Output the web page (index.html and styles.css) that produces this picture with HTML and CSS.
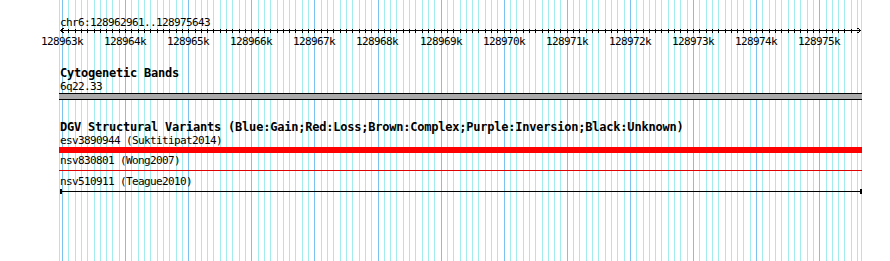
FILE: index.html
```html
<!DOCTYPE html>
<html lang="en">
<head>
    <meta charset="UTF-8">
    <title>chr6:128962961..128975643</title>
    <link rel="stylesheet" href="styles.css">
</head>
<body>
    <div class="panel">
        <svg class="grid" id="grid" width="890" height="261"></svg>

        <div class="tracks">
            <div class="ruler">
                <div class="ruler-title">chr6:128962961..128975643</div>
                <svg class="ruler-axis" id="axis" width="890" height="8"></svg>
                <div class="ruler-labels">
                    <span class="tick-label" style="left:62px">128963k</span>
                    <span class="tick-label" style="left:125px">128964k</span>
                    <span class="tick-label" style="left:188px">128965k</span>
                    <span class="tick-label" style="left:251px">128966k</span>
                    <span class="tick-label" style="left:314px">128967k</span>
                    <span class="tick-label" style="left:377px">128968k</span>
                    <span class="tick-label" style="left:441px">128969k</span>
                    <span class="tick-label" style="left:504px">128970k</span>
                    <span class="tick-label" style="left:567px">128971k</span>
                    <span class="tick-label" style="left:630px">128972k</span>
                    <span class="tick-label" style="left:693px">128973k</span>
                    <span class="tick-label" style="left:756px">128974k</span>
                    <span class="tick-label" style="left:819px">128975k</span>
                </div>
            </div>

            <div class="track track-bands">
                <div class="track-title">Cytogenetic Bands</div>
                <div class="feature-label">6q22.33</div>
                <div class="band"></div>
            </div>

            <div class="track track-dgv">
                <div class="track-title">DGV Structural Variants (Blue:Gain;Red:Loss;Brown:Complex;Purple:Inversion;Black:Unknown)</div>
                <div class="feature-label">esv3890944 (Suktitipat2014)</div>
                <div class="sv sv-loss-thick"></div>
                <div class="feature-label label-wong">nsv830801 (Wong2007)</div>
                <div class="sv sv-loss-thin"></div>
                <div class="feature-label label-teague">nsv510911 (Teague2010)</div>
                <div class="sv sv-unknown"></div>
            </div>
        </div>
    </div>

    <script>
        // scale: x of 128963000 and pixels per kb
        const START = 128962961;
        const END = 128975643;
        const X0 = 62;
        const PX_PER_KB = 63.1;
        const NS = 'http://www.w3.org/2000/svg';

        function xOf(bp) {
            return Math.round(X0 + (bp - 128963000) * PX_PER_KB / 1000) + 0.5;
        }

        function line(svg, x1, y1, x2, y2, cls) {
            const l = document.createElementNS(NS, 'line');
            l.setAttribute('x1', x1);
            l.setAttribute('y1', y1);
            l.setAttribute('x2', x2);
            l.setAttribute('y2', y2);
            l.setAttribute('class', cls);
            svg.appendChild(l);
        }

        // background grid
        const grid = document.getElementById('grid');
        line(grid, 59.5, 0, 59.5, 261, 'grid-minor');
        line(grid, 861.5, 0, 861.5, 261, 'grid-minor');
        for (let bp = 128963000; bp < END; bp += 100) {
            const x = xOf(bp);
            line(grid, x, 0, x, 261, bp % 1000 === 0 ? 'grid-major' : 'grid-minor');
        }

        // ruler axis with ticks and arrows
        const axis = document.getElementById('axis');
        line(axis, 60, 2.5, 861, 2.5, 'axis-line');
        for (let bp = 128963000; bp < END; bp += 100) {
            const x = xOf(bp);
            if (x > 855) break;
            line(axis, x, 1, x, 5, 'axis-line');
        }
        const arrows = document.createElementNS(NS, 'path');
        arrows.setAttribute('d', 'M63.5 0 L60.5 2.5 L63.5 5 M857.5 0 L860.5 2.5 L857.5 5');
        arrows.setAttribute('class', 'axis-arrow');
        axis.appendChild(arrows);
    </script>
</body>
</html>
```

FILE: styles.css
```css
body {
    margin: 0;
    padding: 0;
    background-color: #ffffff;
    font-family: 'DejaVu Sans Mono', 'Liberation Mono', monospace;
    color: #000000;
}

.panel {
    position: relative;
    width: 890px;
    height: 261px;
    overflow: hidden;
    background-color: #ffffff;
}

.grid {
    position: absolute;
    top: 0;
    left: 0;
    shape-rendering: crispEdges;
}

.grid-minor {
    stroke: #a2ecee;
    stroke-width: 1;
}

.grid-major {
    stroke: #7cc2ee;
    stroke-width: 1;
}

.tracks {
    position: relative;
    padding-top: 17px;
}

/* ruler */
.ruler-title,
.feature-label,
.tick-label {
    font-size: 11px;
    line-height: 11px;
    height: 11px;
    letter-spacing: -0.62px;
    white-space: nowrap;
}

.ruler-title,
.feature-label,
.track-title {
    padding-left: 60px;
}

.ruler-axis {
    display: block;
    shape-rendering: crispEdges;
}

.axis-line {
    stroke: #000000;
    stroke-width: 1;
}

.axis-arrow {
    fill: none;
    stroke: #000000;
    stroke-width: 1;
}

.ruler-labels {
    position: relative;
    height: 11px;
}

.tick-label {
    position: absolute;
    top: 0;
    transform: translateX(-50%);
}

/* tracks */
.track-title {
    font-weight: bold;
    font-size: 12px;
    line-height: 13px;
    height: 13px;
    letter-spacing: -0.22px;
    white-space: nowrap;
}

.track-bands {
    margin-top: 20px;
}

.track-dgv {
    margin-top: 21px;
}

.track .feature-label {
    margin-top: 1px;
}

.band {
    margin: 1px 0 0 59px;
    width: 803px;
    height: 5px;
    background-color: #aaaaaa;
    border-top: 1px solid #000000;
    border-bottom: 1px solid #000000;
}

.sv {
    margin-left: 59px;
    width: 803px;
}

.sv-loss-thick {
    margin-top: 1px;
    height: 6px;
    background-color: #ff0000;
}

.track .label-wong {
    margin-top: 2px;
}

.sv-loss-thin {
    margin-top: 4px;
    height: 1px;
    background-color: #e00000;
}

.track .label-teague {
    margin-top: 5px;
}

.sv-unknown {
    margin: 2px 0 0 60px;
    width: 798px;
    height: 5px;
    border-left: 2px solid #000000;
    border-right: 2px solid #000000;
    background: linear-gradient(#000000, #000000) center / 100% 1px no-repeat;
}
```
